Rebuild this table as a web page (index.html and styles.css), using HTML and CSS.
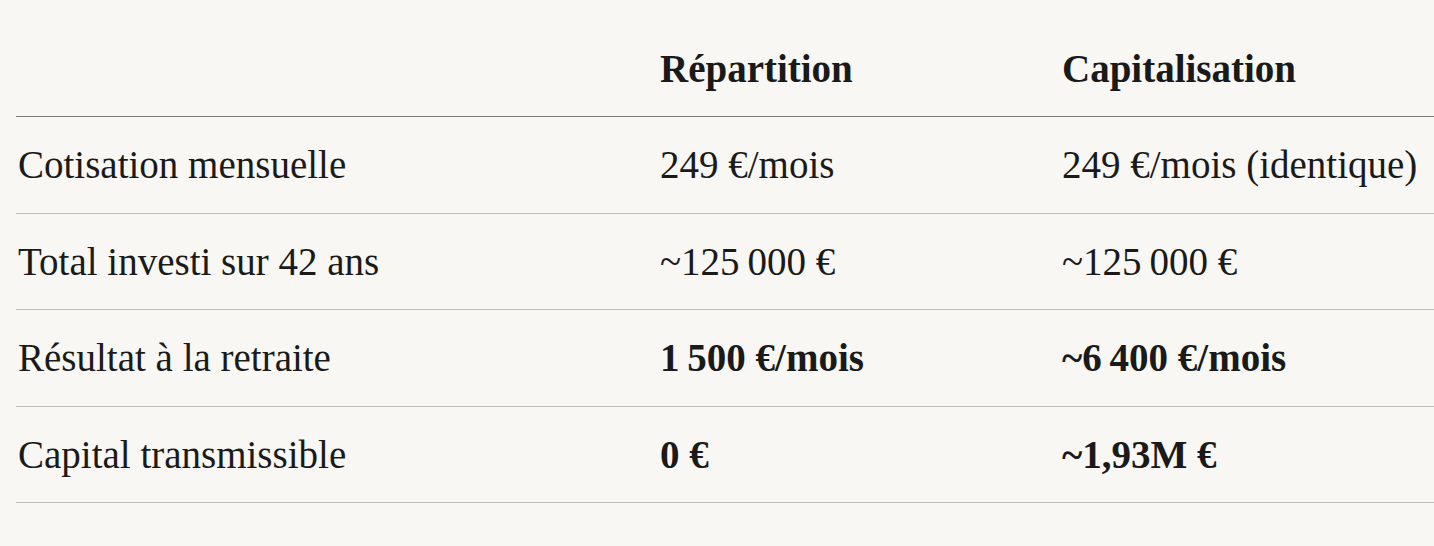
FILE: index.html
```html
<!DOCTYPE html>
<html lang="fr">
<head>
<meta charset="utf-8">
<title>Répartition vs Capitalisation</title>
<link rel="stylesheet" href="styles.css">
</head>
<body>
<div class="table">
  <div class="row head">
    <div class="cell"></div>
    <div class="cell">Répartition</div>
    <div class="cell">Capitalisation</div>
  </div>
  <div class="row">
    <div class="cell">Cotisation mensuelle</div>
    <div class="cell">249&nbsp;€/mois</div>
    <div class="cell">249&nbsp;€/mois (identique)</div>
  </div>
  <div class="row">
    <div class="cell">Total investi sur 42 ans</div>
    <div class="cell">~125&#8239;000&nbsp;€</div>
    <div class="cell">~125&#8239;000&nbsp;€</div>
  </div>
  <div class="row">
    <div class="cell">Résultat à la retraite</div>
    <div class="cell strong">1&#8239;500&nbsp;€/mois</div>
    <div class="cell strong">~6&#8239;400&nbsp;€/mois</div>
  </div>
  <div class="row">
    <div class="cell">Capital transmissible</div>
    <div class="cell strong">0&nbsp;€</div>
    <div class="cell strong">~1,93M&nbsp;€</div>
  </div>
</div>
</body>
</html>
```

FILE: styles.css
```css
html, body {
  margin: 0;
  padding: 0;
  background: #f8f7f3;
}

body {
  font-family: "Liberation Serif", "Times New Roman", serif;
  color: #1a1a1a;
  padding-top: 20.5px;
  padding-left: 16px;
}

.table {
  display: flex;
  flex-direction: column;
}

.row {
  display: grid;
  grid-template-columns: 644px 402px 1fr;
  border-bottom: 1px solid #bdbcb8;
}

.row.head {
  border-bottom-color: #7b7b79;
}

.cell {
  font-size: 39px;
  line-height: 47.5px;
  padding: 24px 0;
  white-space: nowrap;
}

.cell:first-child {
  padding-left: 2px;
}

.head .cell,
.cell.strong {
  font-weight: 700;
}
```
